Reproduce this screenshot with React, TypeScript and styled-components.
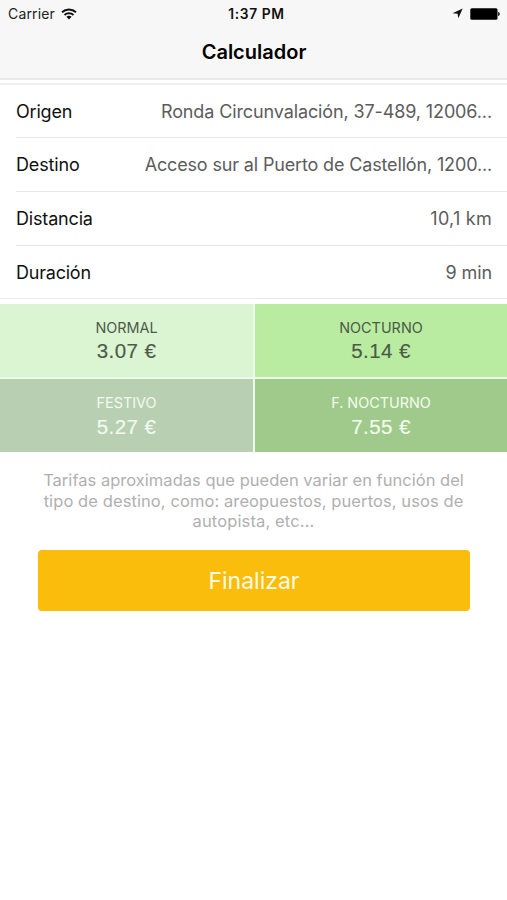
import React from 'react';
import styled, { createGlobalStyle } from 'styled-components';

const GlobalStyle = createGlobalStyle`
  * { box-sizing: border-box; }
  body {
    margin: 0;
    background: #fff;
    font-family: Inter, "Liberation Sans", sans-serif;
    -webkit-font-smoothing: antialiased;
  }
`;

const Screen = styled.main`
  width: 100%;
  min-height: 900px;
  background: #fff;
`;

const Header = styled.header`
  height: 80px;
  background: #f7f7f7;
  border-bottom: 2px solid #e9e9e9;
`;

const StatusBar = styled.div`
  display: grid;
  grid-template-columns: 1fr auto 1fr;
  align-items: center;
  height: 27px;
  padding: 0 7px 0 8px;
  font-size: 14px;
  color: #222;
`;

const StatusLeft = styled.div`
  display: flex;
  align-items: center;
  gap: 6px;
`;

const StatusRight = styled.div`
  display: flex;
  align-items: center;
  justify-content: flex-end;
  gap: 7px;
`;

const Carrier = styled.span`
  letter-spacing: 0.15px;
`;

const Clock = styled.time`
  padding-left: 5px;
  font-size: 13.8px;
  font-weight: 600;
  letter-spacing: 0.6px;
  color: #111;
`;

const Title = styled.h1`
  margin: 0;
  height: 51px;
  padding-left: 1px;
  line-height: 51px;
  text-align: center;
  font-size: 20px;
  font-weight: 600;
  color: #000;
`;

const Details = styled.dl`
  margin: 3px 0 0;
  border-top: 2px solid #f0f0f0;
  border-bottom: 1px solid #e9e9ec;
  padding-left: 16px;
`;

const DetailRow = styled.div`
  display: flex;
  align-items: center;
  justify-content: space-between;
  height: 54px;
  padding-right: 15px;
  font-size: 18px;
  white-space: nowrap;
  & + & { border-top: 1px solid #e7e7ea; }
  &:first-child { height: 52px; }
  &:last-child { height: 53px; }
`;

const Label = styled.dt<{ $track: number }>`
  color: #111;
  letter-spacing: ${p => p.$track}px;
`;

const Value = styled.dd<{ $track: number }>`
  margin: 0;
  color: #5c5c5c;
  letter-spacing: ${p => p.$track}px;
`;

const Fares = styled.section`
  display: grid;
  grid-template-columns: 253px 1fr;
  grid-auto-rows: 73px;
  gap: 2px;
  margin-top: 5px;
  background: #eff9eb;
`;

const Fare = styled.div<{ $bg: string; $ink: string; $gap: number }>`
  display: flex;
  flex-direction: column;
  align-items: center;
  gap: ${p => p.$gap}px;
  padding-top: 14px;
  background: ${p => p.$bg};
  color: ${p => p.$ink};
`;

const FareName = styled.span`
  font-size: 14.4px;
  line-height: 20px;
`;

const FarePrice = styled.span`
  font-family: "Liberation Sans", Arial, sans-serif;
  font-size: 20.5px;
  line-height: 24px;
  letter-spacing: 0.4px;
  -webkit-text-stroke: 0.15px currentColor;
`;

const Note = styled.p`
  margin: 18px 38px 0;
  text-align: center;
  font-size: 16.5px;
  line-height: 20.5px;
  color: #b0b0b0;
`;

const NoteLine = styled.span<{ $track: number }>`
  display: block;
  white-space: nowrap;
  letter-spacing: ${p => p.$track}px;
`;

const FinishButton = styled.button`
  display: block;
  width: 432px;
  height: 61px;
  margin: 18px 0 0 38px;
  padding: 1px 0 0;
  border: 0;
  border-radius: 4px;
  background: #fabd0b;
  color: #fffbe8;
  font: 400 23px/60px Inter, sans-serif;
`;

const WifiIcon = () => (
  <svg width="16" height="12" viewBox="0 0 16 12" fill="none" stroke="#111" strokeWidth="1.9">
    <path d="M1 4.3C4.9.6 11.1.6 15 4.3" />
    <path d="M3.5 7C6 4.7 10 4.7 12.5 7" />
    <path d="M8 11.4 5.4 8.8C6.9 7.4 9.1 7.4 10.6 8.8Z" fill="#111" stroke="none" />
  </svg>
);

const LocationIcon = () => (
  <svg width="11" height="11" viewBox="0 0 11 11" fill="#111">
    <path d="M10.7.5 6.3 10.3 5.6 5.8.5 5.2Z" />
  </svg>
);

const BatteryIcon = () => (
  <svg width="30" height="12" viewBox="0 0 30 12" fill="#000">
    <rect x=".3" y=".2" width="27.2" height="11.6" rx="1.5" />
    <path d="M28.2 4c2 .4 2 3.6 0 4Z" />
  </svg>
);

const details = [
  { label: 'Origen', value: 'Ronda Circunvalación, 37-489, 12006...', lt: -0.2, vt: -0.12 },
  { label: 'Destino', value: 'Acceso sur al Puerto de Castellón, 1200...', lt: -0.13, vt: -0.15 },
  { label: 'Distancia', value: '10,1 km', lt: -0.17, vt: 0.25 },
  { label: 'Duración', value: '9 min', lt: -0.22, vt: -0.1 },
];

const fares = [
  { name: 'NORMAL', price: '3.07 €', bg: '#dbf4d1', ink: '#4c5b4b', gap: 1 },
  { name: 'NOCTURNO', price: '5.14 €', bg: '#b9eca1', ink: '#4b5a47', gap: 1 },
  { name: 'FESTIVO', price: '5.27 €', bg: '#b9cfb2', ink: '#f2fbef', gap: 2 },
  { name: 'F. NOCTURNO', price: '7.55 €', bg: '#9fca8b', ink: '#f4fdf0', gap: 2 },
];

const noteLines = [
  { text: 'Tarifas aproximadas que pueden variar en función del', track: 0.02 },
  { text: 'tipo de destino, como: areopuestos, puertos, usos de', track: 0.09 },
  { text: 'autopista, etc...', track: 0.13 },
];

export default function App() {
  return (
    <Screen>
      <GlobalStyle />
      <Header>
        <StatusBar>
          <StatusLeft><Carrier>Carrier</Carrier><WifiIcon /></StatusLeft>
          <Clock>1:37 PM</Clock>
          <StatusRight><LocationIcon /><BatteryIcon /></StatusRight>
        </StatusBar>
        <Title>Calculador</Title>
      </Header>
      <Details>
        {details.map(d => (
          <DetailRow key={d.label}>
            <Label $track={d.lt}>{d.label}</Label>
            <Value $track={d.vt}>{d.value}</Value>
          </DetailRow>
        ))}
      </Details>
      <Fares>
        {fares.map(f => (
          <Fare key={f.name} $bg={f.bg} $ink={f.ink} $gap={f.gap}>
            <FareName>{f.name}</FareName>
            <FarePrice>{f.price}</FarePrice>
          </Fare>
        ))}
      </Fares>
      <Note>
        {noteLines.map(l => <NoteLine key={l.text} $track={l.track}>{l.text}</NoteLine>)}
      </Note>
      <FinishButton type="button">Finalizar</FinishButton>
    </Screen>
  );
}
